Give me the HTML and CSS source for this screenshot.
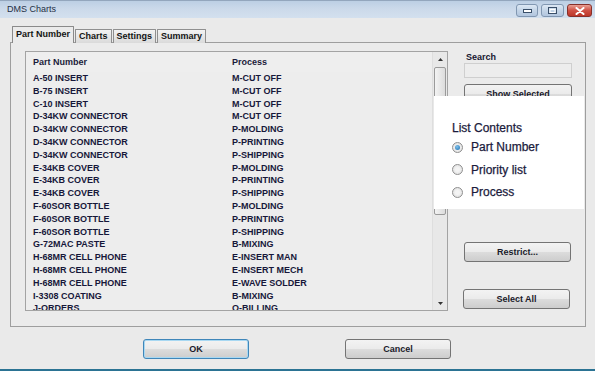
FILE: index.html
```html
<!DOCTYPE html>
<html>
<head>
<meta charset="utf-8">
<link rel="stylesheet" href="styles.css">
</head>
<body>
<div class="window">
  <div class="titlebar">
    <span class="title">DMS Charts</span>
    <div class="controls">
      <span class="ctl min"><svg width="9" height="4" viewBox="0 0 9 4"><rect x="0.5" y="0.5" width="8" height="3" fill="#fff" stroke="#3a4f69" stroke-width="1"/></svg></span>
      <span class="ctl max"><svg width="9" height="7" viewBox="0 0 9 7"><rect x="0.5" y="0.5" width="8" height="6" fill="none" stroke="#3a4f69" stroke-width="1"/><rect x="2" y="2.5" width="5" height="3" fill="none" stroke="#fff" stroke-width="1"/></svg></span>
      <span class="ctl close"><svg width="10" height="8" viewBox="0 0 10 8"><path d="M1.5 1 L8.5 7 M8.5 1 L1.5 7" stroke="#fff" stroke-width="2" stroke-linecap="round"/></svg></span>
    </div>
  </div>
  <div class="client">
    <div class="tabs">
      <div class="tab active">Part Number</div>
      <div class="tab">Charts</div>
      <div class="tab">Settings</div>
      <div class="tab">Summary</div>
    </div>
    <div class="panel">
      <div class="listbox">
        <div class="list-content">
          <div class="row head"><span>Part Number</span><span>Process</span></div>
          <div class="row"><span>A-50 INSERT</span><span>M-CUT OFF</span></div>
          <div class="row"><span>B-75 INSERT</span><span>M-CUT OFF</span></div>
          <div class="row"><span>C-10 INSERT</span><span>M-CUT OFF</span></div>
          <div class="row"><span>D-34KW CONNECTOR</span><span>M-CUT OFF</span></div>
          <div class="row"><span>D-34KW CONNECTOR</span><span>P-MOLDING</span></div>
          <div class="row"><span>D-34KW CONNECTOR</span><span>P-PRINTING</span></div>
          <div class="row"><span>D-34KW CONNECTOR</span><span>P-SHIPPING</span></div>
          <div class="row"><span>E-34KB COVER</span><span>P-MOLDING</span></div>
          <div class="row"><span>E-34KB COVER</span><span>P-PRINTING</span></div>
          <div class="row"><span>E-34KB COVER</span><span>P-SHIPPING</span></div>
          <div class="row"><span>F-60SOR BOTTLE</span><span>P-MOLDING</span></div>
          <div class="row"><span>F-60SOR BOTTLE</span><span>P-PRINTING</span></div>
          <div class="row"><span>F-60SOR BOTTLE</span><span>P-SHIPPING</span></div>
          <div class="row"><span>G-72MAC PASTE</span><span>B-MIXING</span></div>
          <div class="row"><span>H-68MR CELL PHONE</span><span>E-INSERT MAN</span></div>
          <div class="row"><span>H-68MR CELL PHONE</span><span>E-INSERT MECH</span></div>
          <div class="row"><span>H-68MR CELL PHONE</span><span>E-WAVE SOLDER</span></div>
          <div class="row"><span>I-3308 COATING</span><span>B-MIXING</span></div>
          <div class="row"><span>J-ORDERS</span><span>O-BILLING</span></div>
        </div>
        <div class="scrollbar">
          <div class="arrow"><svg width="5" height="3" viewBox="0 0 5 3"><path d="M0 3 L2.5 0 L5 3 Z" fill="#333"/></svg></div>
          <div class="track"><div class="thumb"></div></div>
          <div class="arrow"><svg width="5" height="3" viewBox="0 0 5 3"><path d="M0 0 L2.5 3 L5 0 Z" fill="#333"/></svg></div>
        </div>
      </div>
      <div class="side">
        <div class="label">Search</div>
        <div class="textbox"></div>
        <div class="btn show">Show Selected</div>
        <div class="btn restrict">Restrict...</div>
        <div class="btn selectall">Select All</div>
      </div>
      <div class="overlay">
        <div class="ov-title">List Contents</div>
        <div class="radio-row"><span class="radio checked"></span><span>Part Number</span></div>
        <div class="radio-row"><span class="radio"></span><span>Priority list</span></div>
        <div class="radio-row"><span class="radio"></span><span>Process</span></div>
      </div>
    </div>
    <div class="footer">
      <div class="btn ok">OK</div>
      <div class="btn cancel">Cancel</div>
    </div>
  </div>
</div>
</body>
</html>
```
FILE: styles.css
```css
* { box-sizing: border-box; margin: 0; padding: 0; }
html, body { width: 595px; height: 371px; overflow: hidden; background: #eaeaea; }
body { font-family: "Liberation Sans", Arial, sans-serif; }

.window {
  width: 595px; height: 371px;
  background: #eaeaea;
  border-bottom: 2px solid #2b7393;
  display: flex; flex-direction: column;
}

.titlebar {
  height: 18px;
  background: linear-gradient(#bccfe4, #cbd9ea 45%, #d3e0ee);
  border-top: 1px solid #93a6bd;
  display: flex; align-items: flex-start; justify-content: space-between;
}
.title { font-size: 9px; color: #1f2f45; padding-left: 7px; line-height: 17px; }
.controls { display: flex; gap: 3px; padding-right: 3px; margin-top: 3px; }
.ctl {
  height: 13px;
  border: 1px solid #8197b1; border-radius: 3px;
  background: linear-gradient(#dde8f4, #c3d4e7 50%, #b2c6de);
  display: flex; align-items: center; justify-content: center;
}
.ctl.min { width: 22px; }
.ctl.max { width: 23px; }
.ctl.close {
  width: 25px;
  background: linear-gradient(#e8a095, #cf5044 50%, #bd3729);
  border-color: #86302a;
}

.client { flex: 1; display: flex; flex-direction: column; padding: 8px 0 0 10px; }

.tabs {
  display: flex; align-items: flex-end;
  padding-left: 2px; height: 17px;
  position: relative; z-index: 1; margin-bottom: -1px;
}
.tab {
  height: 14px;
  font-size: 9px; font-weight: bold; color: #141414;
  border: 1px solid #8f8f8f; border-bottom: none;
  background: linear-gradient(#f3f3f3, #dadada);
  padding: 0 3px; line-height: 13px;
  margin-right: 1px;
  border-radius: 1px 1px 0 0;
  white-space: nowrap;
}
.tab.active {
  height: 17px; width: 62px;
  background: #ebebeb;
  padding: 0 3px; line-height: 15px;
  border-color: #8a8a8a;
  text-align: center;
}

.panel {
  width: 576px; height: 285px;
  border: 1px solid #9e9e9e;
  background: #ebebeb;
  position: relative;
  display: flex; align-items: flex-start;
  padding: 8px 0 0 14px;
}

.listbox {
  width: 423px; height: 260px;
  border: 1px solid #a3a3a3;
  background: #ededed;
  display: flex;
  overflow: hidden;
}
.list-content { flex: 1; overflow: hidden; padding-left: 7px; }
.row {
  display: grid; grid-template-columns: 199px 1fr;
  font-size: 9px; font-weight: bold; color: #17173a;
  line-height: 12.8px; height: 12.8px;
  white-space: nowrap;
}
.row.head {
  height: 20px; line-height: 20px; color: #1b1b3a;
  margin-left: -7px; padding-left: 7px;
  background: #eeeeee;
}

.scrollbar {
  width: 15px; display: flex; flex-direction: column;
  background: #e8e8e8; border-left: 1px solid #dedede;
}
.arrow { height: 14px; display: flex; align-items: center; justify-content: center; }
.track { flex: 1; padding: 1px 1px; }
.thumb {
  height: 148px;
  border: 1px solid #9a9a9a; border-radius: 2px;
  background: linear-gradient(90deg, #f3f3f3, #dcdcdc);
}

.side { margin-left: 16px; width: 108px; display: flex; flex-direction: column; }
.label { font-size: 9px; font-weight: bold; color: #161630; line-height: 12px; padding-left: 2px; }
.textbox { height: 15px; border: 1px solid #cfcfcf; background: #ededed; }

.btn {
  height: 20px;
  border: 1px solid #747474; border-radius: 3px;
  background: linear-gradient(#f3f3f3, #ebebeb 48%, #dcdcdc 52%, #cdcdcd);
  font-size: 9px; font-weight: bold; color: #1a1a2a;
  display: flex; align-items: center; justify-content: center;
}
.btn.show { margin-top: 6px; }
.btn.restrict { margin-top: 138px; width: 107px; }
.btn.selectall { margin-top: 27px; width: 107px; margin-left: -1px; }

.overlay {
  position: absolute; left: 423px; top: 53px;
  width: 150px; height: 113px;
  background: #ffffff;
  padding: 25px 0 0 18px;
}
.ov-title { font-size: 12px; color: #1b1b3c; line-height: 14px; margin-bottom: 1px; -webkit-text-stroke: 0.25px #1b1b3c; }
.radio-row {
  display: flex; align-items: center; gap: 8px;
  height: 22.5px;
  font-size: 12px; color: #1b1b3c;
  -webkit-text-stroke: 0.25px #1b1b3c;
}
.radio {
  width: 11px; height: 11px; border-radius: 50%;
  border: 1px solid #8f8f8f;
  background: radial-gradient(circle, #f4f4f4 30%, #d8d8d8 100%);
  display: inline-block; position: relative;
  -webkit-text-stroke: 0;
}
.radio.checked::after {
  content: ""; position: absolute; left: 2px; top: 2px;
  width: 5px; height: 5px; border-radius: 50%;
  background: radial-gradient(circle at 40% 35%, #7fc1ec, #1d6fae);
}

.footer { display: flex; padding: 12px 0 0 133px; gap: 96px; }
.btn.ok { width: 106px; border-color: #3f86b9; box-shadow: inset 0 0 0 1px #a8d8f2; }
.btn.cancel { width: 106px; }
```
